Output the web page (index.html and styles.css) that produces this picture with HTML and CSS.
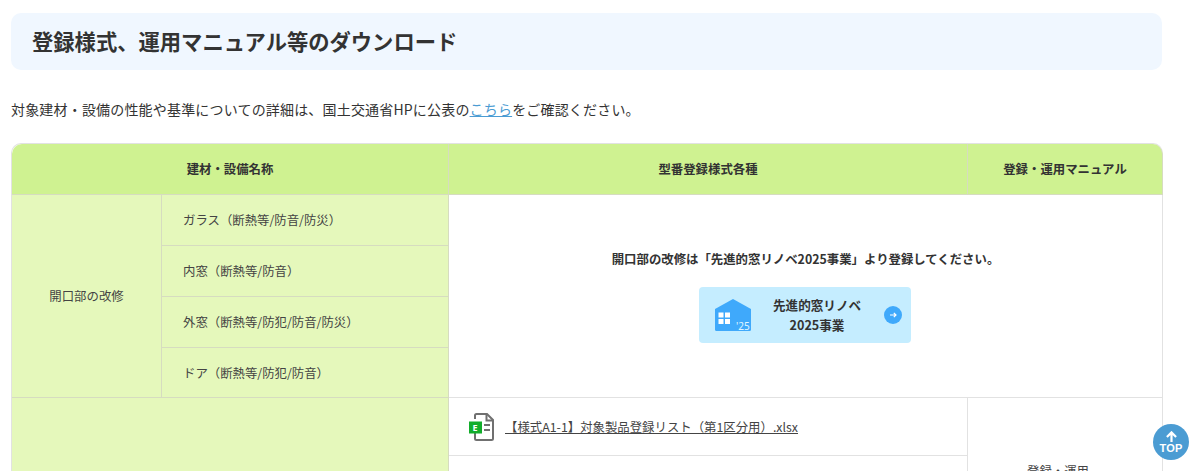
FILE: index.html
```html
<!DOCTYPE html>
<html lang="ja">
<head>
<meta charset="utf-8">
<title>登録様式、運用マニュアル等のダウンロード</title>
<link rel="stylesheet" href="styles.css">
</head>
<body>
<main class="page">
  <h2 class="heading">登録様式、運用マニュアル等のダウンロード</h2>
  <p class="lead">対象建材・設備の性能や基準についての詳細は、国土交通省HPに公表の<a class="lead-link" href="#">こちら</a>をご確認ください。</p>
  <table class="dl-table">
    <colgroup>
      <col class="col-a"><col class="col-b"><col class="col-c"><col class="col-d">
    </colgroup>
    <thead>
      <tr>
        <th colspan="2" class="head first">建材・設備名称</th>
        <th class="head">型番登録様式各種</th>
        <th class="head last">登録・運用マニュアル</th>
      </tr>
    </thead>
    <tbody>
      <tr class="row-std">
        <td rowspan="4" class="cat">開口部の改修</td>
        <td class="sub">ガラス（断熱等/防音/防災）</td>
        <td rowspan="4" colspan="2" class="notice">
          <p class="notice-text">開口部の改修は「先進的窓リノベ2025事業」より登録してください。</p>
          <a class="promo" href="#">
            <svg class="promo-house" viewBox="0 0 36 32" width="36" height="32">
              <path fill="#3fa9fb" d="M18 0 36 10V30.500Q36 32 34.500 32H1.500Q0 32 0 30.500V10Z"/>
              <rect x="3.500" y="13.500" width="5" height="5" fill="#fff"/>
              <rect x="10" y="13.500" width="5" height="5" fill="#fff"/>
              <rect x="3.500" y="20" width="5" height="5" fill="#fff"/>
              <rect x="10" y="20" width="5" height="5" fill="#fff"/>
              <text x="21" y="30.500" class="promo-year">'25</text>
            </svg>
            <span class="promo-label">先進的窓リノベ<br>2025事業</span>
            <svg class="promo-arrow" viewBox="0 0 18 18" width="18" height="18">
              <circle cx="9" cy="9" r="9" fill="#3fa9fb"/>
              <path d="M6 9h6M9.800 6.800 12 9l-2.200 2.200" fill="none" stroke="#fff" stroke-width="1.200"/>
            </svg>
          </a>
        </td>
      </tr>
      <tr class="row-std"><td class="sub">内窓（断熱等/防音）</td></tr>
      <tr class="row-std"><td class="sub">外窓（断熱等/防犯/防音/防災）</td></tr>
      <tr class="row-short"><td class="sub">ドア（断熱等/防犯/防音）</td></tr>
      <tr class="row-file">
        <td colspan="2" rowspan="3" class="cat"></td>
        <td class="file">
          <a class="file-link" href="#">
            <svg class="file-icon" viewBox="0 0 26 28" width="26" height="28">
              <path d="M6 6V2.500Q6 1 7.500 1H18L24 7V25.500Q24 27 22.500 27H7.500Q6 27 6 25.500V20" fill="#fff" stroke="#707070" stroke-width="2"/>
              <path d="M17.500 1V7.500H24" fill="none" stroke="#707070" stroke-width="2"/>
              <path d="M15 12h6M15 17h6" stroke="#707070" stroke-width="2"/>
              <rect x="0" y="8.500" width="13" height="12" fill="#12ad2b"/>
              <text x="3.500" y="18" class="file-e">E</text>
            </svg>
            <span class="file-name">【様式A1-1】対象製品登録リスト（第1区分用）.xlsx</span>
          </a>
        </td>
        <td rowspan="3" class="manual">登録・運用<br>マニュアル</td>
      </tr>
      <tr class="row-file"><td class="file"></td></tr>
      <tr class="row-file"><td class="file"></td></tr>
    </tbody>
  </table>
</main>
<a class="to-top" href="#">
  <svg viewBox="0 0 14 12" width="13" height="11"><path d="M7 12V2M2 6.500 7 1.500l5 5" fill="none" stroke="#fff" stroke-width="2.400"/></svg>
  <span class="to-top-label">TOP</span>
</a>
</body>
</html>
```

FILE: styles.css
```css
html, body {
  margin: 0;
  height: 471px;
  overflow: hidden;
  background: #fff;
}
body {
  font-family: "Noto Sans CJK JP", "Noto Sans", sans-serif;
  color: #333;
  font-size: 14px;
}
.page {
  width: 1151px;
  margin-left: 11px;
  padding-top: 13px;
}
.heading {
  margin: 0;
  height: 57px;
  box-sizing: border-box;
  padding: 0 0 2px 21px;
  background: #f0f7ff;
  border-radius: 10px;
  font-size: 21.3px;
  font-weight: 700;
  line-height: 55px;
}
.lead {
  margin: 28px 0 23px;
  font-size: 14px;
  line-height: 22px;
  letter-spacing: 0.18px;
}
.lead-link {
  color: #4b9cd3;
  text-decoration: underline;
}
.dl-table {
  width: 1151px;
  table-layout: fixed;
  border-collapse: separate;
  border-spacing: 0;
  border-top: 1px solid #e2e2e2;
  border-left: 1px solid #e2e2e2;
  border-radius: 10px 10px 0 0;
  font-size: 12.4px;
  color: #444;
}
.col-a { width: 150px; }
.col-b { width: 287px; }
.col-c { width: 519px; }
.col-d { width: 195px; }
.dl-table th, .dl-table td {
  border-right: 1px solid #e2e2e2;
  border-bottom: 1px solid #e2e2e2;
  padding: 0;
  box-sizing: border-box;
}
.dl-table .cat, .dl-table .sub, .dl-table th { border-color: #d6dcc0; }
.head {
  height: 51px;
  background: #cff291;
  font-size: 12.4px;
  font-weight: 700;
  text-align: center;
  color: #333;
}
.head.first { border-top-left-radius: 10px; }
.head.last { border-top-right-radius: 10px; }
.row-std { height: 51px; }
.row-short { height: 50px; }
.row-file { height: 58px; }
.cat {
  background: #e5f8bb;
  text-align: center;
}
.dl-table .sub {
  background: #e5f8bb;
  padding-left: 21px;
}
.dl-table .notice {
  text-align: center;
  color: #333;
}
.notice-text {
  margin: 0 0 18px;
  font-size: 12.4px;
  font-weight: 700;
  line-height: 20px;
}
.promo {
  display: inline-flex;
  align-items: center;
  width: 212px;
  height: 56px;
  margin-right: 2px;
  box-sizing: border-box;
  padding: 0 9px 0 16px;
  background: #c5edff;
  border-radius: 4px;
  color: #333;
  text-decoration: none;
}
.promo-house { flex: none; }
.promo-year {
  font-family: "Noto Sans", sans-serif;
  font-size: 10px;
  fill: #e0f6ff;
}
.promo-label {
  flex: 1;
  font-size: 12.6px;
  font-weight: 700;
  line-height: 20px;
  text-align: center;
}
.promo-arrow { flex: none; }
.dl-table .file { padding: 4px 0 0 20px; }
.file-link {
  display: inline-flex;
  align-items: center;
  gap: 10px;
  color: #444;
  text-decoration: none;
}
.file-icon { flex: none; }
.file-e {
  font-family: "Noto Sans", sans-serif;
  font-size: 9px;
  font-weight: 700;
  fill: #fff;
}
.file-name {
  text-decoration: underline;
  font-size: 12.4px;
}
.dl-table .manual {
  text-align: center;
  padding: 0 14px 10px 0;
}
.to-top {
  position: fixed;
  left: 1153px;
  top: 424px;
  width: 36px;
  height: 36px;
  border-radius: 50%;
  background: #4b9cd3;
  display: flex;
  flex-direction: column;
  align-items: center;
  justify-content: center;
  text-decoration: none;
}
.to-top svg { display: block; margin-bottom: 1px; }
.to-top-label {
  color: #fff;
  font-family: "Liberation Sans", sans-serif;
  font-size: 11px;
  font-weight: 700;
  line-height: 11px;
  letter-spacing: 0.2px;
}
```
